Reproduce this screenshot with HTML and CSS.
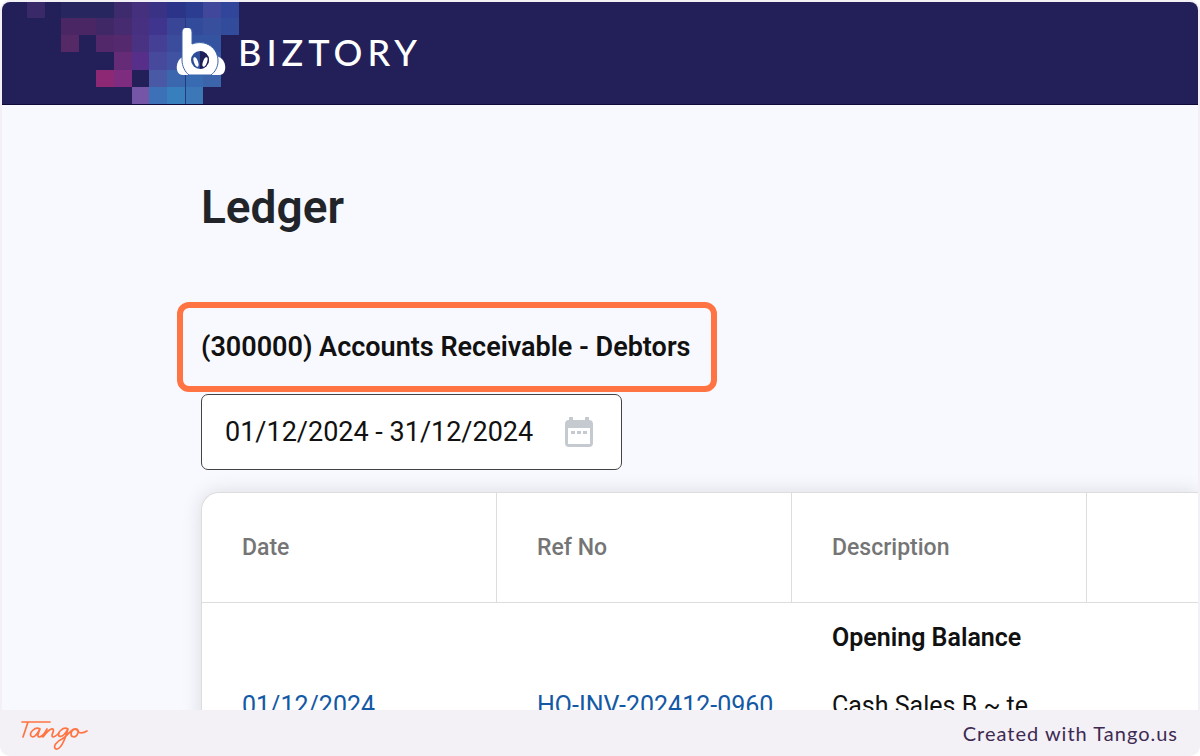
FILE: index.html
```html
<!doctype html>
<html lang="en">
  <head>
    <meta charset="UTF-8" />
    <meta name="viewport" content="width=device-width, initial-scale=1.0" />
    <title>Ledger - Biztory</title>
    <link rel="stylesheet" href="styles.css" />
  </head>
  <body>
    <div class="frame">
      <div class="screen">
        <header class="topbar">
          <svg class="mosaic" viewBox="0 0 240 102" width="240" height="102" shape-rendering="crispEdges" aria-hidden="true">
            <!-- row 1 -->
            <rect x="25" y="0" width="18" height="16" fill="#3a2968" />
            <rect x="59" y="0" width="53" height="16" fill="#28265f" />
            <rect x="112" y="0" width="18" height="16" fill="#3e2b6d" />
            <rect x="130" y="0" width="17" height="16" fill="#44307c" />
            <rect x="147" y="0" width="18" height="16" fill="#3a3284" />
            <rect x="165" y="0" width="18" height="16" fill="#2c348a" />
            <rect x="183" y="0" width="18" height="16" fill="#2c3c91" />
            <rect x="201" y="0" width="18" height="16" fill="#41489b" />
            <rect x="219" y="0" width="18" height="16" fill="#31469a" />
            <!-- row 2 -->
            <rect x="59" y="16" width="35" height="17" fill="#4a2665" />
            <rect x="94" y="16" width="18" height="17" fill="#402866" />
            <rect x="112" y="16" width="18" height="17" fill="#472b71" />
            <rect x="130" y="16" width="17" height="17" fill="#47307f" />
            <rect x="147" y="16" width="18" height="17" fill="#3f348e" />
            <rect x="165" y="16" width="18" height="17" fill="#394697" />
            <rect x="183" y="16" width="18" height="17" fill="#334b9b" />
            <rect x="201" y="16" width="18" height="17" fill="#384f9d" />
            <rect x="219" y="16" width="18" height="17" fill="#324b9b" />
            <!-- row 3 -->
            <rect x="59" y="33" width="18" height="17" fill="#552866" />
            <rect x="94" y="33" width="18" height="17" fill="#53286a" />
            <rect x="112" y="33" width="18" height="17" fill="#54296d" />
            <rect x="130" y="33" width="17" height="17" fill="#493282" />
            <rect x="147" y="33" width="18" height="17" fill="#454096" />
            <rect x="165" y="33" width="18" height="17" fill="#3b4c9c" />
            <rect x="183" y="33" width="36" height="17" fill="#3453a1" />
            <!-- row 4 -->
            <rect x="112" y="50" width="18" height="18" fill="#662b77" />
            <rect x="130" y="50" width="17" height="18" fill="#572f8a" />
            <rect x="147" y="50" width="18" height="18" fill="#47499d" />
            <rect x="165" y="50" width="18" height="18" fill="#4053a2" />
            <rect x="183" y="50" width="36" height="18" fill="#355aa6" />
            <!-- row 5 -->
            <rect x="94" y="68" width="18" height="17" fill="#8c2874" />
            <rect x="112" y="68" width="18" height="17" fill="#7e2c80" />
            <rect x="147" y="68" width="18" height="17" fill="#4959a5" />
            <rect x="165" y="68" width="18" height="17" fill="#3a67ae" />
            <rect x="183" y="68" width="18" height="17" fill="#396bb2" />
            <rect x="201" y="68" width="18" height="17" fill="#3b64aa" />
            <!-- row 6 -->
            <rect x="130" y="85" width="17" height="17" fill="#7556a6" />
            <rect x="147" y="85" width="18" height="17" fill="#3c70b7" />
            <rect x="165" y="85" width="18" height="17" fill="#387fbd" />
            <rect x="183" y="85" width="18" height="17" fill="#3c78b8" />
            <path d="M183 0v102" stroke="#263a7f" />
          </svg>
          <a class="brand" href="#">
            <svg class="brand-mark" viewBox="0 0 50 48" width="50" height="48" aria-hidden="true">
              <path fill="#fff" d="M7 47C2 47 0 42 1 37c1-5 4-8 8-9h31c5 1 8 4 9 9 1 5-1 10-6 10z" />
              <path fill="#fff" stroke="#3a63aa" d="M6 4a5 5 0 0 1 10 0v12c14-5 26 4 26 17 0 6-3 11-7 14H13C9 44 6 38 6 32z" />
              <circle cx="24" cy="32" r="9" fill="#2d4f9a" />
              <path fill="#211f58" d="M24 23a9 9 0 0 1 0 18z" />
              <ellipse cx="20" cy="34" rx="2" ry="5" fill="#fff" transform="rotate(-20 20 34)" />
              <ellipse cx="29" cy="34" rx="2" ry="5" fill="#fff" transform="rotate(20 29 34)" />
            </svg>
            <span class="brand-name">BIZTORY</span>
          </a>
        </header>

        <main class="content">
          <h1 class="title">Ledger</h1>
          <h2 class="account">(300000) Accounts Receivable - Debtors</h2>

          <div class="date-range">
            <input class="date-input" type="text" value="01/12/2024 - 31/12/2024" aria-label="Date range" />
            <svg class="calendar" viewBox="0 0 28 30" width="28" height="30" aria-hidden="true">
              <path fill="#c5cad1" fill-rule="evenodd" d="M4 0h4v3h12V0h4v3a4 4 0 0 1 4 4v19a4 4 0 0 1-4 4H4a4 4 0 0 1-4-4V7a4 4 0 0 1 4-4zM3 11v16h22V11z" />
              <path fill="#c5cad1" d="M6 14h4v3H6zM12 14h4v3h-4zM18 14h4v3h-4z" />
            </svg>
          </div>

          <table class="ledger">
            <thead>
              <tr>
                <th>Date</th>
                <th>Ref No</th>
                <th>Description</th>
                <th></th>
              </tr>
            </thead>
            <tbody>
              <tr>
                <td></td>
                <td></td>
                <td class="opening">Opening Balance</td>
                <td></td>
              </tr>
              <tr>
                <td><a href="#">01/12/2024</a></td>
                <td><a href="#">HQ-INV-202412-0960</a></td>
                <td>Cash Sales B ~ te</td>
                <td></td>
              </tr>
            </tbody>
          </table>
        </main>
      </div>

      <footer class="credit">
        <svg class="tango" viewBox="0 0 70 36" width="70" height="36" role="img" aria-label="Tango">
          <g fill="none" stroke="#ff7442" stroke-width="1.7" stroke-linecap="round" stroke-linejoin="round">
            <path d="M2 7h28M8 7L3 22" />
            <path d="M20 14c-5-3-11 4-9 7 3 3 7-3 9-7-2 4-3 8-1 8 3 0 6-4 8-8l-4 8c3-4 7-9 10-8 2 2-3 7 0 8 2 0 4-2 6-4" />
            <path d="M48 14c-5-3-11 4-9 7 3 2 7-3 9-7-2 7-6 21-12 20-4-2 1-8 6-10 6-3 8-9 12-10 5-1 5 3 3 6-2 3-6 2-6-1 0-4 4-6 6-4 1 3 5 4 10 1" />
          </g>
        </svg>
        <a class="credit-link" href="#">Created with Tango.us</a>
      </footer>
    </div>
  </body>
</html>
```
FILE: styles.css
```css
* {
  box-sizing: border-box;
}

body {
  margin: 0;
  font-family: Roboto, "Liberation Sans", sans-serif;
  background: #fff;
  color: #111;
}

a {
  color: #1459a5;
  text-decoration: none;
}

.frame {
  display: flex;
  flex-direction: column;
  height: 100vh;
  padding: 2px 2px 0;
  background: #f3f0f6;
  border-radius: 10px;
  overflow: hidden;
}

.screen {
  flex: 1;
  min-height: 0;
  overflow: hidden;
  background: #f8f9fe;
  border-radius: 8px 8px 0 0;
}

.topbar {
  position: relative;
  height: 103px;
  padding: 26px 174px;
  background: #231f58;
  border-bottom: 1px solid #0e0b38;
}

.mosaic {
  position: absolute;
  top: 0;
  left: 0;
}

.brand {
  position: relative;
  display: flex;
  align-items: center;
  gap: 12px;
  color: #fff;
}

.brand-name {
  font-family: Lato, sans-serif;
  font-size: 36px;
  line-height: 46px;
  font-weight: 500;
  letter-spacing: 5px;
}

.content {
  padding: 74px 0 0 199px;
}

.title {
  margin: 0;
  font-size: 46px;
  line-height: 56px;
  font-weight: 600;
  color: #212529;
}

/* the outline sits outside the text column */
.account {
  width: fit-content;
  margin: 67px 0 0 -24px;
  padding: 20px 20px 20px 18px;
  border: 6px solid #ff7442;
  border-radius: 12px;
  font-size: 27px;
  line-height: 38px;
  font-weight: 600;
}

.date-range {
  display: flex;
  align-items: center;
  width: 421px;
  height: 76px;
  margin-top: 2px;
  padding: 0 28px 0 23px;
  background: #fff;
  border: 1px solid #444;
  border-radius: 7px;
}

.date-input {
  flex: 1;
  min-width: 0;
  padding: 0;
  border: 0;
  outline: 0;
  background: none;
  font: 27px/36px Roboto, "Liberation Sans", sans-serif;
  color: #111;
}

.calendar {
  flex: none;
}

.ledger {
  width: 100%;
  margin-top: 22px;
  table-layout: fixed;
  border-collapse: separate;
  border-spacing: 0;
  background: #fff;
  border: solid #ddd;
  border-width: 1px 0 0 1px;
  border-radius: 18px 0 0 0;
  box-shadow: 0 0 20px rgba(0, 0, 0, 0.12);
  text-align: left;
  font-size: 25px;
  line-height: 28px;
}

.ledger th {
  width: 295px;
  height: 110px;
  padding: 0 40px;
  border-right: 1px solid #ddd;
  border-bottom: 1px solid #ddd;
  font-size: 23px;
  font-weight: 500;
  color: #757575;
}

.ledger th:last-child {
  width: auto;
  border-right: 0;
}

.ledger td {
  height: 68px;
  padding: 2px 0 0 40px;
  white-space: nowrap;
}

.ledger .opening {
  font-weight: 600;
}

.credit {
  display: flex;
  align-items: center;
  justify-content: space-between;
  height: 46px;
  padding: 0 20px 0 18px;
}

.credit-link {
  font-family: Lato, sans-serif;
  font-size: 20px;
  line-height: 28px;
  letter-spacing: 1px;
  color: #3d2a52;
}
```
